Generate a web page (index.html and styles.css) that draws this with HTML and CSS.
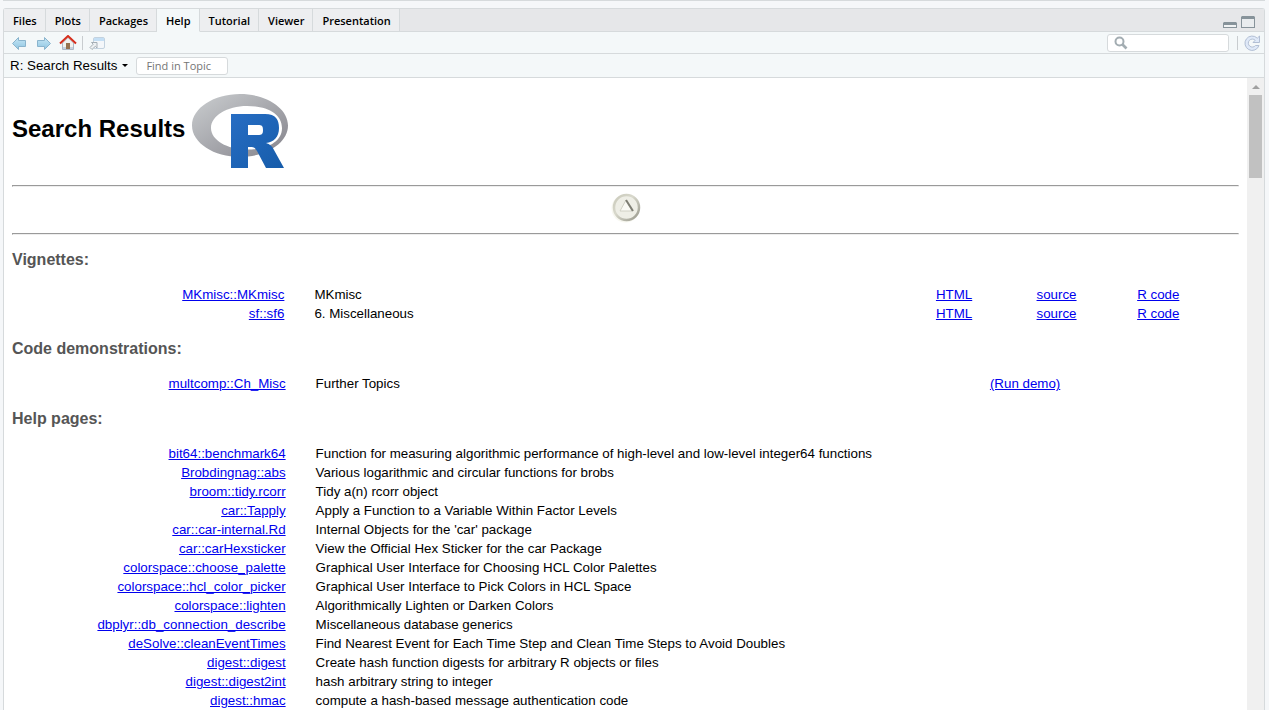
FILE: index.html
```html
<!DOCTYPE html>
<html lang="en">
<head>
<meta charset="utf-8">
<title>R: Search Results</title>
<link rel="stylesheet" href="styles.css">
</head>
<body>
<div class="upper-pane"></div>
<div class="pane">
  <header class="tabbar">
    <nav class="tabs" aria-label="Panes">
      <button class="tab">Files</button>
      <button class="tab">Plots</button>
      <button class="tab">Packages</button>
      <button class="tab tab-active">Help</button>
      <button class="tab">Tutorial</button>
      <button class="tab">Viewer</button>
      <button class="tab">Presentation</button>
    </nav>
    <div class="window-buttons">
      <button class="icon-button" aria-label="Minimize"><svg width="14" height="14" viewBox="0 0 14 14"><path d="M1 8h12l1 1v5H0V9z" fill="#87939a"/><path d="M1 11h12v2H1z" fill="#f1f3f4"/></svg></button>
      <button class="icon-button" aria-label="Maximize"><svg width="14" height="14" viewBox="0 0 14 14"><path d="M1 2h12l1 1v11H0V3z" fill="#87939a"/><path d="M1 5h12v8H1z" fill="#e9ecee"/></svg></button>
    </div>
  </header>
  <div class="toolbar">
    <div class="toolbar-group">
      <button class="icon-button" aria-label="Back"><svg width="16" height="16" viewBox="0 0 16 16"><defs><linearGradient id="arrow" x2="0" y2="1"><stop stop-color="#c6e7f5"/><stop offset="1" stop-color="#8fc5e2"/></linearGradient></defs><path d="M1.500 8.500 7.500 2.500v3h7v6h-7v3z" fill="url(#arrow)" stroke="#8ab4cd" stroke-linejoin="round"/></svg></button>
      <button class="icon-button" aria-label="Forward"><svg width="16" height="16" viewBox="0 0 16 16"><path d="M15.500 8.500 9.500 2.500v3h-7v6h7v3z" fill="url(#arrow)" stroke="#8ab4cd" stroke-linejoin="round"/></svg></button>
      <button class="icon-button" aria-label="Home"><svg width="18" height="16" viewBox="0 0 18 16"><path d="M3.500 8 9 2.500l5.500 5.500v6.500h-11z" fill="#f2f2ee" stroke="#aeb8c5"/><path d="M4 12h10v2H4z" fill="#c7d2df"/><path d="M7 8h4v6H7z" fill="#96724e"/><path d="M1 8.500 9 1l8 7.500" fill="none" stroke="#d62e1c" stroke-width="2"/></svg></button>
      <span class="divider"></span>
      <button class="icon-button" aria-label="Show in new window"><svg width="16" height="16" viewBox="0 0 16 16"><rect x="4.500" y="2.500" width="11" height="11" rx="1.500" fill="#f4f7fa" stroke="#c3d2df"/><path d="M5 3h10v3H5z" fill="#c4dff5"/><path d="M2.500 7.500h5.500V13L6.300 11.300 3 14.500 1 12.500 4.200 9.200z" fill="#eef1f3" stroke="#a5aeb5"/></svg></button>
    </div>
    <div class="toolbar-group toolbar-end">
      <label class="search"><svg width="14" height="14" viewBox="0 0 14 14"><circle cx="5.500" cy="5.500" r="4" fill="none" stroke="#a3adb2" stroke-width="2"/><path d="m8.500 8.500 4 4" stroke="#a3adb2" stroke-width="2.600"/></svg><input type="text" aria-label="Search help"></label>
      <span class="divider"></span>
      <button class="icon-button" aria-label="Refresh"><svg width="16" height="16" viewBox="0 0 16 16"><path d="M15.500 1v6.500H9L11.200 5.300A4 4 0 1 0 11.500 10.500h3.500A7.200 7.200 0 1 1 13.300 3.200z" fill="#dfe9f8" stroke="#b2bfd4" stroke-linejoin="round"/></svg></button>
    </div>
  </div>
  <div class="topicbar">
    <button class="topic">R: Search Results <span class="caret"></span></button>
    <input class="find" type="text" placeholder="Find in Topic" aria-label="Find in Topic">
  </div>
  <div class="viewport">
    <main class="document">
      <h1>Search Results
        <svg class="logo" width="100" height="76" viewBox="2 0 100 76" role="img" aria-label="R logo"><defs><linearGradient id="ring" x2="1" y2="1"><stop stop-color="#cbced0"/><stop offset="1" stop-color="#84838b"/></linearGradient><linearGradient id="letter" x2="1" y2="1"><stop stop-color="#276dc3"/><stop offset="1" stop-color="#165caa"/></linearGradient></defs><path fill-rule="evenodd" fill="url(#ring)" d="M50 64C24 64 2 50 2 32.500S24 1 50 1s48 14 48 31.500S76 64 50 64zM57 13c-20 0-36 10-36 22s16 21.500 36 21.500S92 49 92 35 77 13 57 13z"/><path d="M73 53c4 1 6 4 8 7l3-3-5-5z" fill="#fff"/><path fill-rule="evenodd" fill="url(#letter)" d="M41 21h34c11 0 14 6 14 14 0 9-5 14-13 15 4 1 6 3 8 7l10 18H76L67 58c-2-4-4-4-9-4v21H41zM58 32v10h10c4 0 5-1 5-5s-1-5-5-5z"/></svg>
      </h1>
      <hr>
      <div class="navigation"><a href="#top" aria-label="Top"><svg width="30" height="30" viewBox="0 0 30 30"><defs><linearGradient id="bead" x2="1" y2="1"><stop stop-color="#c9c9ba"/><stop offset=".4" stop-color="#d8d8cc"/><stop offset="1" stop-color="#98988c"/></linearGradient></defs><circle cx="14.500" cy="15.500" r="14" fill="#f7f7f0"/><circle cx="15.500" cy="14.500" r="12.500" fill="#eeeee6" stroke="url(#bead)" stroke-width="2.500"/><path d="M9 18 15 7l6 11z" fill="#fafaf5" stroke="#d0d0c4"/><path d="m15 7 7 11" stroke="#7d7d73" stroke-width="2"/></svg></a></div>
      <hr>
      <h3>Vignettes:</h3>
      <table class="vignettes">
        <colgroup><col class="name"><col class="title"><col class="action"><col class="action"><col></colgroup>
        <tr><td><a href="#mk">MKmisc::MKmisc</a></td><td>MKmisc</td><td><a href="#mk-html">HTML</a></td><td><a href="#mk-source">source</a></td><td><a href="#mk-code">R code</a></td></tr>
        <tr><td><a href="#sf">sf::sf6</a></td><td>6. Miscellaneous</td><td><a href="#sf-html">HTML</a></td><td><a href="#sf-source">source</a></td><td><a href="#sf-code">R code</a></td></tr>
      </table>
      <h3>Code demonstrations:</h3>
      <table class="demos">
        <colgroup><col class="name"><col class="title"><col></colgroup>
        <tr><td><a href="#multcomp">multcomp::Ch_Misc</a></td><td>Further Topics</td><td><a href="#run">(Run demo)</a></td></tr>
      </table>
      <h3>Help pages:</h3>
      <table class="pages">
        <colgroup><col class="name"><col></colgroup>
        <tr><td><a href="#p1">bit64::benchmark64</a></td><td>Function for measuring algorithmic performance of high-level and low-level integer64 functions</td></tr>
        <tr><td><a href="#p2">Brobdingnag::abs</a></td><td>Various logarithmic and circular functions for brobs</td></tr>
        <tr><td><a href="#p3">broom::tidy.rcorr</a></td><td>Tidy a(n) rcorr object</td></tr>
        <tr><td><a href="#p4">car::Tapply</a></td><td>Apply a Function to a Variable Within Factor Levels</td></tr>
        <tr><td><a href="#p5">car::car-internal.Rd</a></td><td>Internal Objects for the 'car' package</td></tr>
        <tr><td><a href="#p6">car::carHexsticker</a></td><td>View the Official Hex Sticker for the car Package</td></tr>
        <tr><td><a href="#p7">colorspace::choose_palette</a></td><td>Graphical User Interface for Choosing HCL Color Palettes</td></tr>
        <tr><td><a href="#p8">colorspace::hcl_color_picker</a></td><td>Graphical User Interface to Pick Colors in HCL Space</td></tr>
        <tr><td><a href="#p9">colorspace::lighten</a></td><td>Algorithmically Lighten or Darken Colors</td></tr>
        <tr><td><a href="#p10">dbplyr::db_connection_describe</a></td><td>Miscellaneous database generics</td></tr>
        <tr><td><a href="#p11">deSolve::cleanEventTimes</a></td><td>Find Nearest Event for Each Time Step and Clean Time Steps to Avoid Doubles</td></tr>
        <tr><td><a href="#p12">digest::digest</a></td><td>Create hash function digests for arbitrary R objects or files</td></tr>
        <tr><td><a href="#p13">digest::digest2int</a></td><td>hash arbitrary string to integer</td></tr>
        <tr><td><a href="#p14">digest::hmac</a></td><td>compute a hash-based message authentication code</td></tr>
      </table>
    </main>
    <div class="scrollbar"><span class="scroll-up"></span><span class="thumb"></span></div>
  </div>
</div>
</body>
</html>
```
FILE: styles.css
```css
* { box-sizing: border-box; }
body {
  margin: 0;
  height: 100vh;
  overflow: hidden;
  display: flex;
  flex-direction: column;
  background: #f5f7f9;
  padding: 0 4px 0 3px;
  font-family: "Liberation Sans", Arial, sans-serif;
  color: #000;
}
button, input { font: inherit; color: inherit; }
button { margin: 0; padding: 0; border: 0; background: none; }
svg { display: block; }
.upper-pane {
  flex: none;
  height: 1px;
  margin-bottom: 7px;
  background: #d6dadc;
}
.pane {
  flex: 1;
  min-height: 0;
  display: flex;
  flex-direction: column;
  border: 1px solid #d6dadc;
  border-bottom: 0;
  border-radius: 3px 3px 0 0;
  background: #f4f8f9;
}
.tabbar {
  flex: none;
  display: flex;
  justify-content: space-between;
  height: 23px;
  background: #e6e7e9;
  box-shadow: inset 0 -1px #d6dadc;
}
.tabs { display: flex; }
.tab {
  padding: 1px 8px 0 9px;
  border-right: 1px solid #d6dadc;
  border-bottom: 1px solid #d6dadc;
  background: #edeef0;
  font: 600 11px/20px "Open Sans", "Noto Sans", sans-serif;
}
.tab-active {
  border-bottom-color: #f4f8f9;
  background: #f4f8f9;
}
.window-buttons {
  display: flex;
  align-items: center;
  gap: 4px;
  padding-right: 9px;
}
.toolbar, .topicbar {
  flex: none;
  display: flex;
  align-items: center;
  border-bottom: 1px solid #d6dadc;
}
.toolbar {
  height: 22px;
  justify-content: space-between;
  padding: 0 4px 0 7px;
}
.toolbar-group { display: flex; align-items: center; gap: 8px; }
.toolbar-group .divider { margin: 0 -2px 0 -3px; }
.divider { width: 1px; height: 14px; background: #c8cccf; }
.toolbar-end { gap: 6px; }
.toolbar-end .divider { margin: 0 0 0 2px; }
.search {
  display: flex;
  align-items: center;
  width: 122px;
  height: 18px;
  padding-left: 6px;
  border: 1px solid #d6dadc;
  border-radius: 3px;
  background: #fff;
}
.search input { flex: 1; min-width: 0; height: 14px; padding: 0; border: 0; outline: 0; }
.topicbar { height: 24px; padding-left: 6px; gap: 8px; }
.topic { display: flex; align-items: center; gap: 5px; font-size: 10pt; }
.caret { border: 3px solid transparent; border-top-color: #000; border-bottom: 0; }
.find {
  width: 92px;
  height: 18px;
  padding: 0 9px;
  border: 1px solid #d6dadc;
  border-radius: 3px;
  background: #fff;
  font: 11px "Open Sans", "Noto Sans", sans-serif;
}
.find::placeholder { color: #757575; }
.viewport { flex: 1; min-height: 0; display: flex; background: #fff; }
.document {
  flex: 1;
  min-width: 0;
  overflow: hidden;
  padding: 15px 8px 0;
  font-size: 10pt;
  line-height: 17px;
}
h1 {
  margin: 0 0 16px;
  font-size: 24px;
  line-height: 28px;
}
.logo { display: inline-block; vertical-align: middle; }
hr { margin: 0; border: 1px solid; border-color: #9a9a9a #eee #eee #9a9a9a; }
.navigation { display: flex; justify-content: center; padding: 6px 0 10px; }
h3 {
  margin: 17px 0 16px;
  color: #555;
  font-size: 16px;
  line-height: 18px;
}
hr + h3 { margin-top: 16px; }
table { width: 100%; table-layout: fixed; border-collapse: collapse; }
td { height: 19px; padding: 0; }
td:first-child { text-align: right; }
td:nth-child(2) { padding-left: 30px; }
a { color: #00e; }
.vignettes .name { width: 22.2%; }
.vignettes .title { width: 53.1%; }
.vignettes .action { width: 8.2%; }
.demos .name { width: 22.3%; }
.demos .title { width: 57.4%; }
.pages .name { width: 22.3%; }
.scrollbar {
  flex: none;
  width: 17px;
  display: flex;
  flex-direction: column;
  align-items: center;
  gap: 4px;
  padding-top: 7px;
  background: #f0f0f0;
}
.scroll-up { border: 4px solid transparent; border-top: 0; border-bottom-color: #a0a0a0; }
.thumb { width: 13px; height: 83px; margin-top: 2px; background: #c1c1c1; }
```
